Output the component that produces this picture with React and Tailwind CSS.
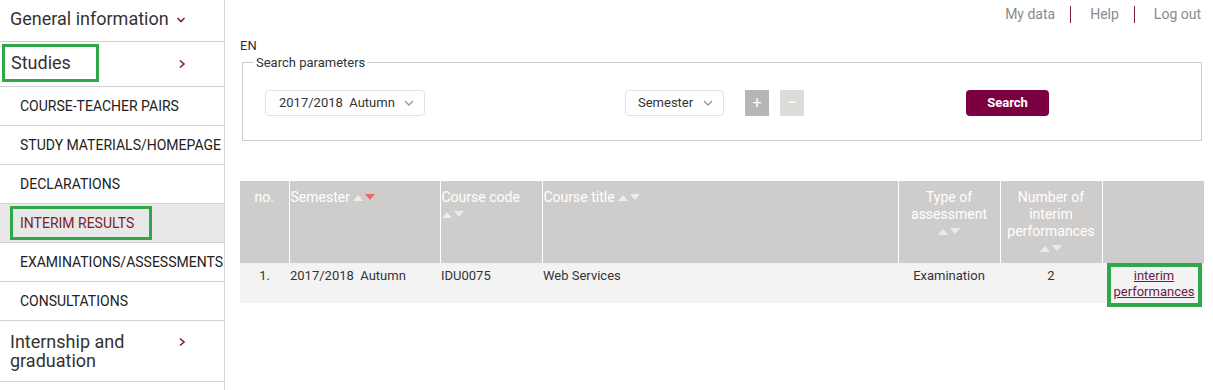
import React from 'react';

const Chevron = ({ dir = 'right', className = '' }) => (
  <svg width="10" height="10" viewBox="0 0 10 10" className={className}>
    {dir === 'right' ? (
      <path d="M3 1.5 L7 5 L3 8.5" fill="none" stroke="#7b1e3a" strokeWidth="1.6" />
    ) : (
      <path d="M1.5 3 L5 6.5 L8.5 3" fill="none" stroke="#7b1e3a" strokeWidth="1.6" />
    )}
  </svg>
);

const SelectChevron = () => (
  <svg width="10" height="8" viewBox="0 0 10 8">
    <path d="M1 2 L5 6 L9 2" fill="none" stroke="#999" strokeWidth="1.4" />
  </svg>
);

// sort arrows in table header
const Sort = ({ down = false }) => (
  <span className="inline-flex items-center gap-[2px] align-middle">
    <svg width="10" height="7" viewBox="0 0 10 7">
      <path d="M0 7 L5 1 L10 7 Z" fill="#ececec" />
    </svg>
    <svg width="10" height="7" viewBox="0 0 10 7">
      <path d="M0 0 L10 0 L5 6 Z" fill={down ? '#e86a6a' : '#ececec'} />
    </svg>
  </span>
);

const subItems = [
  'COURSE-TEACHER PAIRS',
  'STUDY MATERIALS/HOMEPAGE',
  'DECLARATIONS',
  'INTERIM RESULTS',
  'EXAMINATIONS/ASSESSMENTS',
  'CONSULTATIONS',
];

const Sidebar = () => (
  <aside className="w-[225px] shrink-0 border-r border-[#d6d6d6] min-h-[390px]">
    <div className="h-[42px] flex items-center pl-[10px] pb-[4px] border-b border-[#d0d0d0] text-[18px] text-[#333]">
      <span>General information</span>
      <Chevron dir="down" className="ml-[7px] mt-[2px]" />
    </div>
    <div className="h-[45px] flex items-center pl-[2px] pb-[3px] border-b border-[#d0d0d0] text-[18px] text-[#333]">
      <span className="inline-flex items-center w-[97px] h-[38px] pl-[6px] border-[3px] border-[#2ea84a]">
        Studies
      </span>
      <Chevron className="ml-[78px] mt-[2px]" />
    </div>
    {subItems.map((t) =>
      t === 'INTERIM RESULTS' ? (
        <div key={t} className="h-[39px] flex items-center pl-[10px] border-b border-[#d0d0d0] bg-[#e8e8e8] text-[14px] text-[#7b1e2d]">
          <span className="inline-flex items-center w-[142px] h-[34px] pl-[7px] border-[3px] border-[#2ea84a]">
            {t}
          </span>
        </div>
      ) : (
        <div key={t} className="h-[39px] flex items-center pl-[20px] border-b border-[#d0d0d0] text-[14px] text-[#222] whitespace-nowrap">
          {t}
        </div>
      )
    )}
    <div className="h-[61px] flex items-center pl-[10px] border-b border-[#d0d0d0] text-[18px] text-[#333] leading-[19px]">
      <span className="w-[160px]">Internship and graduation</span>
      <Chevron className="ml-[7px] -mt-[18px]" />
    </div>
  </aside>
);

const TopLinks = () => (
  <div className="h-[29px] flex items-center justify-end text-[14px] text-[#8a8a8a] pr-[3px]">
    <span>My data</span>
    <span className="ml-[15px] mr-[19px] w-px h-[17px] bg-[#7b1e3a]" />
    <span>Help</span>
    <span className="ml-[15px] mr-[19px] w-px h-[17px] bg-[#7b1e3a]" />
    <span>Log out</span>
  </div>
);

const SearchBox = () => (
  <fieldset className="ml-[2px] mr-[2px] border border-[#cccccc] px-0 pt-[17px] pb-[24px]">
    <legend className="ml-[11px] px-[2px] text-[13px] text-[#333]">Search parameters</legend>
    <div className="flex items-center pl-[22px]">
      <div className="w-[160px] h-[26px] flex items-center justify-between pl-[13px] pr-[10px] border border-[#e3e3e3] rounded-[4px] text-[13px] text-[#333] whitespace-pre">
        <span>2017/2018  Autumn</span>
        <SelectChevron />
      </div>
      <div className="ml-[200px] w-[99px] h-[26px] flex items-center justify-between pl-[12px] pr-[10px] border border-[#e3e3e3] rounded-[4px] text-[13px] text-[#333]">
        <span>Semester</span>
        <SelectChevron />
      </div>
      <button className="ml-[21px] w-[24px] h-[26px] bg-[#b6b6b4] text-white text-[16px] leading-none flex items-center justify-center">+</button>
      <button className="ml-[11px] w-[24px] h-[26px] bg-[#dcdcd9] text-white text-[16px] leading-none flex items-center justify-center">−</button>
      <button className="ml-[162px] w-[83px] h-[26px] rounded-[4px] bg-[#7b0042] text-white text-[13px] font-bold">Search</button>
    </div>
  </fieldset>
);

const Table = () => (
  <table className="mt-[40px] w-[964px] border-collapse text-[14px]">
    <thead>
      <tr className="bg-[#cfcdcb] text-white align-top leading-[17px]">
        <th className="w-[49px] h-[82px] pt-[8px] font-normal text-center border-r border-white">no.</th>
        <th className="w-[151px] pt-[8px] pl-[1px] font-normal text-left border-r border-white">
          Semester <Sort down />
        </th>
        <th className="w-[102px] pt-[8px] pl-[1px] font-normal text-left border-r border-white">
          Course code<br />
          <Sort />
        </th>
        <th className="w-[356px] pt-[8px] pl-[1px] font-normal text-left border-r border-white">
          Course title <Sort />
        </th>
        <th className="w-[102px] pt-[8px] font-normal text-center border-r border-white">
          Type of<br />assessment<br />
          <Sort />
        </th>
        <th className="w-[102px] pt-[8px] font-normal text-center border-r border-white">
          Number of<br />interim<br />performances<br />
          <Sort />
        </th>
        <th className="font-normal" />
      </tr>
    </thead>
    <tbody>
      <tr className="bg-[#f3f3f3] text-[13px] text-[#333] align-top">
        <td className="h-[40px] pt-[3px] text-center">1.</td>
        <td className="pt-[3px] pl-[1px] whitespace-pre">2017/2018  Autumn</td>
        <td className="pt-[3px] pl-[1px]">IDU0075</td>
        <td className="pt-[3px] pl-[1px]">Web Services</td>
        <td className="pt-[3px] text-center">Examination</td>
        <td className="pt-[3px] text-center">2</td>
        <td className="p-0 text-center">
          <div className="inline-block ml-[2px] w-[95px] h-[44px] -mb-[5px] border-[4px] border-[#2ea84a] pt-[1px] leading-[16px]">
            <a href="#" className="text-[#6b1b4a] underline">interim<br />performances</a>
          </div>
        </td>
      </tr>
    </tbody>
  </table>
);

export default function App() {
  return (
    <div className="flex w-[1213px] h-[390px] bg-white overflow-hidden font-['Roboto',sans-serif]">
      <Sidebar />
      <main className="flex-1 pl-[15px] pr-[9px]">
        <TopLinks />
        <div className="mt-[9px] text-[13px] text-[#333] leading-[15px]">EN</div>
        <SearchBox />
        <Table />
      </main>
    </div>
  );
}
